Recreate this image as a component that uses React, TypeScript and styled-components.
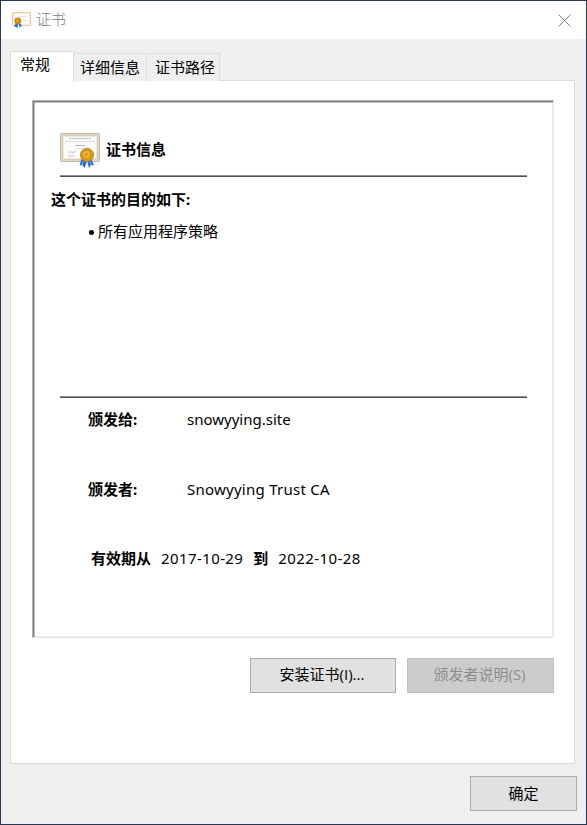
import React from "react";
import styled, { createGlobalStyle } from "styled-components";

const Global = createGlobalStyle`
  * { box-sizing: border-box; }
  html, body { margin: 0; padding: 0; }
  body {
    font-family: "Noto Sans", "Noto Sans CJK SC", sans-serif;
    font-size: 15px;
    line-height: 20px;
    color: #000;
  }
`;

const Window = styled.div`
  width: 587px;
  height: 825px;
  display: flex;
  flex-direction: column;
  background: #efefef;
  border: 1px solid #2b3854;
`;

const TitleBar = styled.header`
  height: 38px;
  flex: none;
  display: flex;
  align-items: center;
  padding: 0 15px 0 11px;
  background: #fff;
  color: #808080;
`;

const Title = styled.span`
  flex: 1;
  margin: -2px 0 0 4px;
  font-weight: 300;
`;

const Tabs = styled.nav`
  display: flex;
  align-items: flex-end;
  height: 42px;
  flex: none;
  padding-left: 9px;
`;

const Tab = styled.div<{ $active?: boolean; $width: number; $inset: number }>`
  width: ${(p) => p.$width}px;
  height: ${(p) => (p.$active ? 31 : 28)}px;
  flex: none;
  padding: ${(p) => (p.$active ? 2 : 3)}px 0 0 ${(p) => p.$inset}px;
  background: ${(p) => (p.$active ? "#fff" : "#efefef")};
  border: 1px solid #dcdcdc;
  border-bottom: 0;
  border-left-width: ${(p) => (p.$active ? 1 : 0)}px;
  margin-bottom: ${(p) => (p.$active ? -1 : 0)}px;
  z-index: ${(p) => (p.$active ? 1 : 0)};
  white-space: nowrap;
`;

const Panel = styled.main`
  width: 565px;
  height: 684px;
  flex: none;
  margin: -1px 0 0 9px;
  padding: 19px 20px 0 21px;
  background: #fff;
  border: 1px solid #dcdcdc;
`;

const Frame = styled.section`
  width: 522px;
  height: 538px;
  padding: 29px 22px 0 15px;
  border: 1px solid #e6e6e6;
  border-top-color: #b0b0b0;
  border-left-color: #b0b0b0;
  box-shadow: inset 2px 2px 0 -0.5px #7f7f7f, inset -1px -1px 0 #f0f0f0;
`;

const Heading = styled.div`
  display: flex;
  height: 45px;
  padding-top: 3px;
  margin-left: 12px;
  font-weight: 700;
`;

const HeadingText = styled.span`
  margin: 6px 0 0 6px;
`;

const Rule = styled.hr`
  width: 467px;
  height: 2px;
  margin: 0 0 0 12px;
  border: 0;
  background: linear-gradient(#8f8f8f 50%, #505050 50%);
`;

const Purpose = styled.h2`
  margin: 12px 0 0 3px;
  font-size: 15px;
  line-height: 20px;
  font-weight: 700;
`;

const Policies = styled.ul`
  height: 175px;
  margin: 12px 0 0 41px;
  padding: 0;
  list-style: none;
`;

const Policy = styled.li`
  display: flex;
  align-items: center;
  gap: 4px;
  &::before {
    content: "";
    width: 5px;
    height: 5px;
    margin-top: 2px;
    border-radius: 50%;
    background: #000;
  }
`;

const Field = styled.div<{ $top: number }>`
  display: flex;
  margin: ${(p) => p.$top}px 0 0 40px;
  height: 20px;
`;

const Label = styled.b`
  width: 99px;
`;

const Value = styled.span<{ $spacing?: number }>`
  letter-spacing: ${(p) => p.$spacing ?? 0}px;
  white-space: nowrap;
`;

const Validity = styled.div`
  display: flex;
  gap: 10px;
  margin: 49px 0 0 43px;
  height: 20px;
  white-space: nowrap;
`;

const Actions = styled.div`
  display: flex;
  gap: 11px;
  margin: 20px 0 0 218px;
`;

const Button = styled.button<{ $width: number; $raised?: boolean }>`
  width: ${(p) => p.$width}px;
  height: 35px;
  flex: none;
  padding: ${(p) => (p.$raised ? "0 2px 4px 0" : "0 0 2px")};
  font: 15px/20px "Open Sans", "Noto Sans CJK SC", sans-serif;
  color: #000;
  background: #e1e1e1;
  border: 1px solid #acacac;
  &:disabled {
    color: #8c8c8c;
    background: #ccc;
    border-color: #c0c0c0;
  }
`;

const Footer = styled.footer`
  display: flex;
  justify-content: flex-end;
  padding: 12px 9px 0 0;
`;

const Icon = styled.svg`
  display: block;
  flex: none;
`;

function CertificateIcon() {
  return (
    <Icon width="40" height="36" viewBox="0 0 40 36">
      <rect x="0.5" y="0.5" width="39" height="28" rx="1" fill="#d8cbb9" stroke="#c4b8a8" />
      <rect x="1.5" y="1.5" width="37" height="26" fill="none" stroke="#eee4d6" strokeDasharray="1 1" />
      <rect x="3.5" y="3.5" width="33" height="22" fill="#fafafa" stroke="#eee8e1" />
      <path d="M9 5.5H31" stroke="#b4bad4" strokeDasharray="2 .5" />
      <path d="M5 8.5H35M16 15.5H25" stroke="#dadcea" />
      <path d="M15 12.5H25" stroke="#b4b9d2" />
      <path d="M8 19.5l3-.6 2 .6 3-1M8 23h6" fill="none" stroke="#b9bcc8" strokeWidth=".9" />
      <path d="M21.5 26l-2 6.5 3-.5 2 3 3-8zM27 27l2 8 2-3 3 .5-3-7z" fill="#2567df" />
      <path d="M23 28l-1 4M30 28l1 4" stroke="#73aafa" />
      <circle cx="27" cy="22" r="6.5" fill="#d99910" stroke="#c08210" />
      <circle cx="26.5" cy="21.5" r="4" fill="#edb735" stroke="#c98a10" strokeWidth=".7" />
      <path d="M25.5 23l2-3" stroke="#93670c" />
    </Icon>
  );
}

function SmallCertificateIcon() {
  return (
    <Icon width="20" height="17" viewBox="0 0 20 17">
      <rect x="0.5" y="0.5" width="18" height="13" fill="#fffdfa" stroke="#e9cda8" />
      <path d="M1.5 2V12M17.5 2V12M2 1.5H17M2 12.5H17" stroke="#f3e3cd" strokeDasharray="2 1" />
      <path d="M6 4.5H14M11 8.5H15" stroke="#dfe2e8" />
      <path d="M4 11l-2 3.5 2 .5 1.5 1 .5-4zM7 11l.5 5 1-1.5 1.5-.5-2-3z" fill="#246bdf" />
      <circle cx="5.8" cy="9" r="3.4" fill="#c98a0b" />
      <circle cx="5.5" cy="8.6" r="1.3" fill="#e9ad2a" />
    </Icon>
  );
}

function CloseIcon() {
  return (
    <Icon width="13" height="13" viewBox="0 0 13 13">
      <path d="M.5.5l12 12M12.5.5l-12 12" stroke="#808080" />
    </Icon>
  );
}

export default function App() {
  return (
    <>
      <Global />
      <Window>
        <TitleBar>
          <SmallCertificateIcon />
          <Title>证书</Title>
          <CloseIcon />
        </TitleBar>
        <Tabs>
          <Tab $active $width={64} $inset={9}>常规</Tab>
          <Tab $width={73} $inset={6}>详细信息</Tab>
          <Tab $width={73} $inset={8}>证书路径</Tab>
        </Tabs>
        <Panel>
          <Frame>
            <Heading>
              <CertificateIcon />
              <HeadingText>证书信息</HeadingText>
            </Heading>
            <Rule />
            <Purpose>这个证书的目的如下:</Purpose>
            <Policies>
              <Policy>所有应用程序策略</Policy>
            </Policies>
            <Rule />
            <Field $top={11}>
              <Label>颁发给:</Label>
              <Value>snowyying.site</Value>
            </Field>
            <Field $top={50}>
              <Label>颁发者:</Label>
              <Value $spacing={0.25}>Snowyying Trust CA</Value>
            </Field>
            <Validity>
              <b>有效期从</b>
              <Value $spacing={0.4}>2017-10-29</Value>
              <b>到</b>
              <Value $spacing={0.4}>2022-10-28</Value>
            </Validity>
          </Frame>
          <Actions>
            <Button $width={146} $raised>安装证书(I)...</Button>
            <Button $width={147} $raised disabled>颁发者说明(S)</Button>
          </Actions>
        </Panel>
        <Footer>
          <Button $width={107}>确定</Button>
        </Footer>
      </Window>
    </>
  );
}
